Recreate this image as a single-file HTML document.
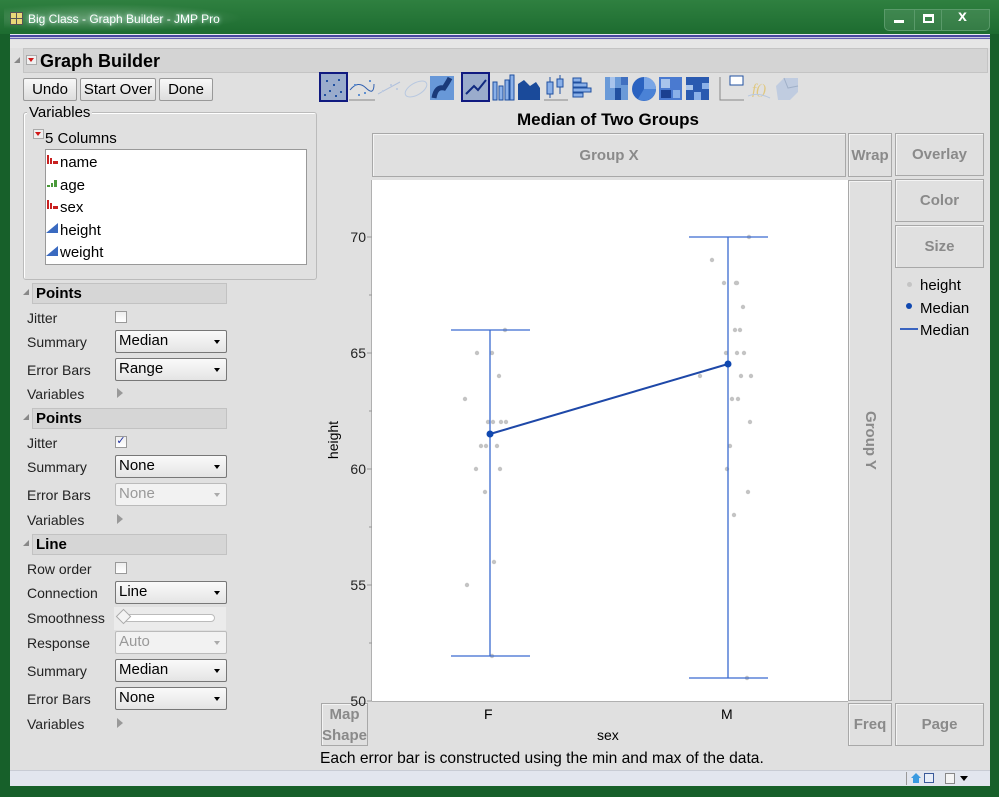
<!DOCTYPE html>
<html><head><meta charset="utf-8"><style>
*{margin:0;padding:0;box-sizing:border-box}
body{width:999px;height:797px;overflow:hidden;background:#17602a;font-family:"Liberation Sans",sans-serif;position:relative}
.a{position:absolute}
.lbl{position:absolute;left:27px;font-size:14px;color:#222}
.sel{position:absolute;left:115px;width:112px;height:23px;border:1px solid #777;border-radius:2px;background:linear-gradient(#fafafa,#e4e4e4);font-size:15px;padding:1px 0 0 3px;color:#000}
.sel:after{content:"";position:absolute;right:6px;top:9px;border:3.5px solid transparent;border-top:4px solid #000}
.sel.dis{border-color:#bbb;color:#999;background:#f2f2f2}
.sel.dis:after{border-top-color:#aaa}
.hdr{position:absolute;left:32px;width:195px;height:21px;background:#d6d6d6;border:1px solid #c2c2c2;font-weight:bold;font-size:15px;padding:1px 0 0 3px}
.tri{position:absolute;left:23px;width:0;height:0;border-left:6px solid transparent;border-bottom:6px solid #888}
.cb{position:absolute;left:115px;width:12px;height:12px;border:1px solid #999;background:linear-gradient(#eee,#fff)}
.arr{position:absolute;left:117px;width:0;height:0;border-top:5px solid transparent;border-bottom:5px solid transparent;border-left:6px solid #999}
.zone{position:absolute;border:1px solid #a8a8a8;box-shadow:inset 1px 1px 0 #f4f4f4;background:#e0e0e0;color:#8a8a8a;font-weight:bold;font-size:15px;display:flex;align-items:center;justify-content:center;text-align:center}
.btn{position:absolute;top:78px;height:23px;border:1px solid #999;border-radius:2px;background:linear-gradient(#f8f8f8,#ddd);font-size:15px;text-align:center;padding-top:2px}
</style></head><body>
<div class="a" style="left:0;top:0;width:999px;height:34px;background:linear-gradient(#2f8040,#1d6c30)"></div>
<div class="a" style="left:4px;top:4px;width:240px;height:28px;background:radial-gradient(ellipse at 40% 50%,rgba(255,255,255,.28),rgba(255,255,255,0) 70%)"></div>
<div class="a" style="left:10px;top:12px;width:13px;height:13px;background:#e8d878;border:1px solid #555"><div class="a" style="left:5px;top:0;width:1px;height:11px;background:#555"></div><div class="a" style="left:0;top:5px;width:11px;height:1px;background:#555"></div></div>
<div class="a" style="left:28px;top:12px;font-size:12px;color:#fff;text-shadow:0 0 4px #cfe">Big Class - Graph Builder - JMP Pro</div>
<div class="a" style="left:884px;top:9px;width:106px;height:22px;border:1px solid #5a9a6a;border-radius:0 0 5px 5px;background:rgba(255,255,255,.1)"></div>
<div class="a" style="left:914px;top:10px;width:1px;height:20px;background:#5a9a6a"></div>
<div class="a" style="left:941px;top:10px;width:1px;height:20px;background:#5a9a6a"></div>
<div class="a" style="left:894px;top:20px;width:10px;height:3px;background:#fff"></div>
<div class="a" style="left:923px;top:14px;width:11px;height:9px;border:2px solid #fff;border-top-width:3px"></div>
<div class="a" style="left:958px;top:8px;font-size:16px;font-weight:bold;color:#fff">x</div>
<div class="a" style="left:10px;top:34px;width:980px;height:752px;background:#e0e0e0"></div>
<div class="a" style="left:10px;top:34px;width:980px;height:6px;background:linear-gradient(#e8e8f4 0,#e8e8f4 1px,#4848a0 1px,#4848a0 3px,#c8c8e0 3px,#c8c8e0 4px,#6060b0 4px,#6060b0 5px,#e0e0e0 5px)"></div>
<div class="a" style="left:10px;top:40px;width:980px;height:8px;background:#e6e6e6"></div>
<div class="a" style="left:23px;top:48px;width:965px;height:25px;background:#d4d4d4;border:1px solid #c4c4c4"></div>
<div class="tri" style="left:14px;top:57px"></div>
<div class="a" style="left:26px;top:55px;width:11px;height:10px;background:#f0f0f0;border:1px solid #aaa"><div class="a" style="left:1px;top:2px;border:3.5px solid transparent;border-top:4px solid #d01818"></div></div>
<div class="a" style="left:40px;top:51px;font-size:18px;font-weight:bold">Graph Builder</div>
<div class="btn" style="left:23px;width:54px">Undo</div>
<div class="btn" style="left:80px;width:76px">Start Over</div>
<div class="btn" style="left:159px;width:54px">Done</div>
<div class="a" style="left:23px;top:112px;width:294px;height:168px;border:1px solid #bbb;border-radius:3px;box-shadow:inset 1px 1px 0 #fff"></div>
<div class="a" style="left:27px;top:104px;font-size:15px;background:#e0e0e0;padding:0 2px">Variables</div>
<div class="a" style="left:33px;top:129px;width:11px;height:10px;background:#f0f0f0;border:1px solid #aaa"><div class="a" style="left:1px;top:2px;border:3.5px solid transparent;border-top:4px solid #d01818"></div></div>
<div class="a" style="left:45px;top:130px;font-size:15px">5 Columns</div>
<div class="a" style="left:45px;top:149px;width:262px;height:116px;background:#fff;border:1px solid #999;font-size:15px;line-height:22.6px;padding:2px 0 0 14px">
<div>name</div><div>age</div><div>sex</div><div>height</div><div>weight</div></div>
<svg class="a" style="left:46px;top:150px" width="14" height="115">
<g fill="#c82020"><rect x="1" y="5" width="2" height="9"/><rect x="4" y="8" width="2" height="6"/><rect x="7" y="11" width="5" height="3"/></g>
<g fill="#4a9a3a"><rect x="1" y="35" width="3" height="2"/><rect x="5" y="33" width="2" height="4"/><rect x="8" y="30" width="3" height="7"/></g>
<g fill="#c82020"><rect x="1" y="50" width="2" height="9"/><rect x="4" y="53" width="2" height="6"/><rect x="7" y="56" width="5" height="3"/></g>
<polygon points="0,83 12,73 12,83" fill="#3a6ac0"/><polygon points="0,106 12,96 12,106" fill="#3a6ac0"/>
</svg>
<div class="tri" style="top:289px"></div><div class="hdr" style="top:283px">Points</div>
<div class="lbl" style="top:310px">Jitter</div><div class="cb" style="top:311px"></div>
<div class="lbl" style="top:334px">Summary</div><div class="sel" style="top:330px">Median</div>
<div class="lbl" style="top:362px">Error Bars</div><div class="sel" style="top:358px">Range</div>
<div class="lbl" style="top:386px">Variables</div><div class="arr" style="top:388px"></div>
<div class="tri" style="top:414px"></div><div class="hdr" style="top:408px">Points</div>
<div class="lbl" style="top:435px">Jitter</div><div class="cb" style="top:436px;font-size:11px;line-height:9px;color:#2030a0;text-align:center">✓</div>
<div class="lbl" style="top:459px">Summary</div><div class="sel" style="top:455px">None</div>
<div class="lbl" style="top:487px">Error Bars</div><div class="sel dis" style="top:483px">None</div>
<div class="lbl" style="top:512px">Variables</div><div class="arr" style="top:514px"></div>
<div class="tri" style="top:540px"></div><div class="hdr" style="top:534px">Line</div>
<div class="lbl" style="top:561px">Row order</div><div class="cb" style="top:562px"></div>
<div class="lbl" style="top:585px">Connection</div><div class="sel" style="top:581px">Line</div>
<div class="lbl" style="top:610px">Smoothness</div>
<div class="a" style="left:114px;top:607px;width:112px;height:23px;background:#ebebeb"></div>
<div class="a" style="left:120px;top:614px;width:95px;height:8px;border:1px solid #bbb;border-radius:4px;background:#fff"></div>
<div class="a" style="left:118px;top:611px;width:11px;height:11px;border:1px solid #aaa;background:#f4f4f4;transform:rotate(45deg)"></div>
<div class="lbl" style="top:635px">Response</div><div class="sel dis" style="top:631px">Auto</div>
<div class="lbl" style="top:663px">Summary</div><div class="sel" style="top:659px">Median</div>
<div class="lbl" style="top:691px">Error Bars</div><div class="sel" style="top:687px">None</div>
<div class="lbl" style="top:716px">Variables</div><div class="arr" style="top:718px"></div>
<svg class="a" style="left:318px;top:72px" width="485" height="32">
<rect x="2" y="1" width="27" height="28" fill="#9aaccc" stroke="#101a80" stroke-width="2"/>
<g fill="#2050a0"><rect x="8" y="8" width="2" height="2"/><rect x="15" y="12" width="2" height="2"/><rect x="11" y="18" width="2" height="2"/><rect x="20" y="7" width="2" height="2"/><rect x="22" y="19" width="2" height="2"/><rect x="6" y="22" width="2" height="2"/><rect x="17" y="23" width="2" height="2"/></g>
<path d="M32 18 Q40 8 48 16 T56 12" fill="none" stroke="#3060b0"/><g fill="#6090d0"><rect x="36" y="12" width="2" height="2"/><rect x="46" y="20" width="2" height="2"/><rect x="51" y="8" width="2" height="2"/><rect x="40" y="22" width="2" height="2"/></g><line x1="31" y1="28" x2="57" y2="28" stroke="#888"/>
<path d="M60 22 L82 10" stroke="#b0c0dc" fill="none"/><g fill="#c0cce0"><rect x="64" y="18" width="2" height="2"/><rect x="72" y="12" width="2" height="2"/><rect x="78" y="16" width="2" height="2"/></g>
<ellipse cx="98" cy="17" rx="12" ry="6" transform="rotate(-30 98 17)" fill="none" stroke="#b8c8e0"/>
<rect x="112" y="4" width="24" height="24" fill="#6898d8"/><path d="M116 26 Q118 14 126 16 Q130 10 132 6" stroke="#1a3a7a" stroke-width="5" fill="none"/>
<rect x="144" y="1" width="27" height="28" fill="#9aaccc" stroke="#101a80" stroke-width="2"/><path d="M148 22 L156 14 L160 18 L168 8" stroke="#102a80" stroke-width="2" fill="none"/>
<g fill="#8ab0e8" stroke="#2050a0"><rect x="175" y="10" width="4" height="18"/><rect x="181" y="14" width="4" height="14"/><rect x="187" y="8" width="4" height="20"/><rect x="192" y="3" width="4" height="25"/></g>
<path d="M200 28 L200 12 L206 8 L212 14 L218 10 L222 16 L222 28Z" fill="#1a4a9a"/>
<g stroke="#2050a0" fill="#8ab0e8"><line x1="232" y1="5" x2="232" y2="26"/><rect x="229" y="10" width="6" height="12"/><line x1="242" y1="3" x2="242" y2="22"/><rect x="239" y="7" width="6" height="8"/></g><line x1="226" y1="28" x2="250" y2="28" stroke="#888"/>
<g fill="#8ab0e8" stroke="#2050a0"><rect x="255" y="6" width="8" height="4"/><rect x="255" y="11" width="14" height="4"/><rect x="255" y="16" width="18" height="4"/><rect x="255" y="21" width="10" height="4"/></g>
<g><rect x="287" y="5" width="23" height="23" fill="#6a9ad8"/><rect x="292" y="5" width="5" height="11" fill="#a8c4ec"/><rect x="297" y="16" width="6" height="12" fill="#2050a0"/><rect x="303" y="5" width="7" height="8" fill="#4070c0"/></g>
<circle cx="326" cy="17" r="12" fill="#2a62c0"/><path d="M326 17 L326 5 A12 12 0 0 1 338 17Z" fill="#7aa6e6"/><path d="M326 17 L338 17 A12 12 0 0 1 320 27Z" fill="#4a82d6"/>
<g><rect x="341" y="5" width="23" height="23" fill="#4a7ad0"/><rect x="343" y="7" width="9" height="9" fill="#a8c4ec"/><rect x="343" y="18" width="10" height="8" fill="#1a4090"/><rect x="355" y="18" width="7" height="8" fill="#8ab0e8"/></g>
<g><rect x="368" y="5" width="23" height="23" fill="#2a5ab0"/><rect x="368" y="13" width="7" height="5" fill="#a8c4ec"/><rect x="376" y="20" width="7" height="8" fill="#8ab0e8"/><rect x="384" y="11" width="7" height="6" fill="#8ab0e8"/></g>
<path d="M402 5 L402 28 L426 28" stroke="#888" fill="none"/><rect x="412" y="4" width="13" height="9" fill="#fff" stroke="#2050a0"/>
<text x="434" y="22" font-size="15" fill="#e0c880" font-style="italic" font-family="Liberation Serif">f()</text><path d="M430 24 Q440 20 452 26" stroke="#b8c8e0" fill="none"/>
<path d="M458 14 L466 6 L480 6 L480 20 L472 28 L460 28Z" fill="#c0cce0"/><path d="M466 6 L470 16 L480 14" stroke="#a0b0c8" fill="none"/>
</svg>
<div class="a" style="left:320px;top:110px;width:576px;text-align:center;font-size:17px;font-weight:bold">Median of Two Groups</div>
<div class="zone" style="left:372px;top:133px;width:474px;height:44px">Group X</div>
<div class="zone" style="left:848px;top:133px;width:44px;height:44px">Wrap</div>
<div class="zone" style="left:895px;top:133px;width:89px;height:43px">Overlay</div>
<div class="zone" style="left:895px;top:179px;width:89px;height:43px">Color</div>
<div class="zone" style="left:895px;top:225px;width:89px;height:43px">Size</div>
<div class="zone" style="left:848px;top:180px;width:44px;height:521px"><span style="transform:rotate(90deg);display:block;white-space:nowrap">Group Y</span></div>
<div class="zone" style="left:848px;top:703px;width:44px;height:43px">Freq</div>
<div class="zone" style="left:895px;top:703px;width:89px;height:43px">Page</div>
<div class="zone" style="left:321px;top:703px;width:47px;height:43px;line-height:21px">Map<br>Shape</div>
<div class="a" style="left:920px;top:275px;font-size:15px;line-height:22.5px">height<br>Median<br>Median</div>
<div class="a" style="left:907px;top:282px;width:5px;height:5px;border-radius:50%;background:#c4c4c4"></div>
<div class="a" style="left:906px;top:303px;width:6px;height:6px;border-radius:50%;background:#1048b0"></div>
<div class="a" style="left:900px;top:328px;width:18px;height:2px;background:#3a64c0"></div>
<svg class="a" style="left:320px;top:178px" width="530" height="530">
<rect x="52" y="2" width="476" height="521" fill="#fff"/>
<line x1="51.5" y1="2" x2="51.5" y2="523" stroke="#b0b0b0"/>
<line x1="52" y1="523.5" x2="528" y2="523.5" stroke="#b0b0b0"/>
<g stroke="#999"><line x1="47" y1="59" x2="52" y2="59"/><line x1="49" y1="117" x2="52" y2="117"/><line x1="47" y1="175" x2="52" y2="175"/><line x1="49" y1="233" x2="52" y2="233"/><line x1="47" y1="291" x2="52" y2="291"/><line x1="49" y1="349" x2="52" y2="349"/><line x1="47" y1="407" x2="52" y2="407"/><line x1="49" y1="465" x2="52" y2="465"/><line x1="47" y1="523" x2="52" y2="523"/></g>
<g font-size="14" text-anchor="end" fill="#222" font-family="Liberation Sans"><text x="46" y="64">70</text><text x="46" y="180">65</text><text x="46" y="296">60</text><text x="46" y="412">55</text><text x="46" y="528">50</text></g>
<text transform="translate(18,262) rotate(-90)" font-size="14" text-anchor="middle" font-family="Liberation Sans">height</text>
<g fill="#c4c4c4">
<circle cx="185" cy="152" r="2.2"/><circle cx="157" cy="175" r="2.2"/><circle cx="172" cy="175" r="2.2"/><circle cx="179" cy="198" r="2.2"/><circle cx="145" cy="221" r="2.2"/><circle cx="168" cy="244" r="2.2"/><circle cx="173" cy="244" r="2.2"/><circle cx="181" cy="244" r="2.2"/><circle cx="186" cy="244" r="2.2"/><circle cx="161" cy="268" r="2.2"/><circle cx="166" cy="268" r="2.2"/><circle cx="177" cy="268" r="2.2"/><circle cx="156" cy="291" r="2.2"/><circle cx="180" cy="291" r="2.2"/><circle cx="165" cy="314" r="2.2"/><circle cx="174" cy="384" r="2.2"/><circle cx="147" cy="407" r="2.2"/><circle cx="172" cy="478" r="2.2"/>
<circle cx="429" cy="59" r="2.2"/><circle cx="392" cy="82" r="2.2"/><circle cx="404" cy="105" r="2.2"/><circle cx="416" cy="105" r="2.2"/><circle cx="417" cy="105" r="2.2"/><circle cx="423" cy="129" r="2.2"/><circle cx="415" cy="152" r="2.2"/><circle cx="420" cy="152" r="2.2"/><circle cx="406" cy="175" r="2.2"/><circle cx="417" cy="175" r="2.2"/><circle cx="424" cy="175" r="2.2"/><circle cx="380" cy="198" r="2.2"/><circle cx="421" cy="198" r="2.2"/><circle cx="431" cy="198" r="2.2"/><circle cx="412" cy="221" r="2.2"/><circle cx="418" cy="221" r="2.2"/><circle cx="430" cy="244" r="2.2"/><circle cx="410" cy="268" r="2.2"/><circle cx="407" cy="291" r="2.2"/><circle cx="428" cy="314" r="2.2"/><circle cx="414" cy="337" r="2.2"/><circle cx="427" cy="500" r="2.2"/>
</g>
<g stroke="#3a6ad0" stroke-width="1.3"><line x1="131" y1="152" x2="210" y2="152"/><line x1="131" y1="478" x2="210" y2="478"/><line x1="170" y1="152" x2="170" y2="478"/><line x1="369" y1="59" x2="448" y2="59"/><line x1="369" y1="500" x2="448" y2="500"/><line x1="408" y1="59" x2="408" y2="500"/></g>
<line x1="170" y1="256" x2="408" y2="186" stroke="#1e48a8" stroke-width="2"/>
<circle cx="170" cy="256" r="3.5" fill="#1048b0"/><circle cx="408" cy="186" r="3.5" fill="#1048b0"/>
</svg>
<div class="a" style="left:484px;top:706px;font-size:14px">F</div>
<div class="a" style="left:721px;top:706px;font-size:14px">M</div>
<div class="a" style="left:597px;top:727px;font-size:14px">sex</div>
<div class="a" style="left:320px;top:750px;font-size:15.6px">Each error bar is constructed using the min and max of the data.</div>
<div class="a" style="left:10px;top:770px;width:980px;height:16px;background:#e2e6ee;border-top:1px solid #c8ccd4"></div>
<div class="a" style="left:906px;top:772px;width:1px;height:13px;background:#999"></div>
<div class="a" style="left:911px;top:773px;width:10px;height:10px;background:#3a9ae0;clip-path:polygon(50% 0,100% 50%,80% 50%,80% 100%,20% 100%,20% 50%,0 50%)"></div>
<div class="a" style="left:924px;top:773px;width:10px;height:10px;border:1px solid #3a5a9a;background:#e8eef8"></div>
<div class="a" style="left:945px;top:773px;width:10px;height:11px;border:1px solid #888;background:#f4f4f4"></div>
<div class="a" style="left:960px;top:776px;border:4px solid transparent;border-top:5px solid #000"></div>
</body></html>
